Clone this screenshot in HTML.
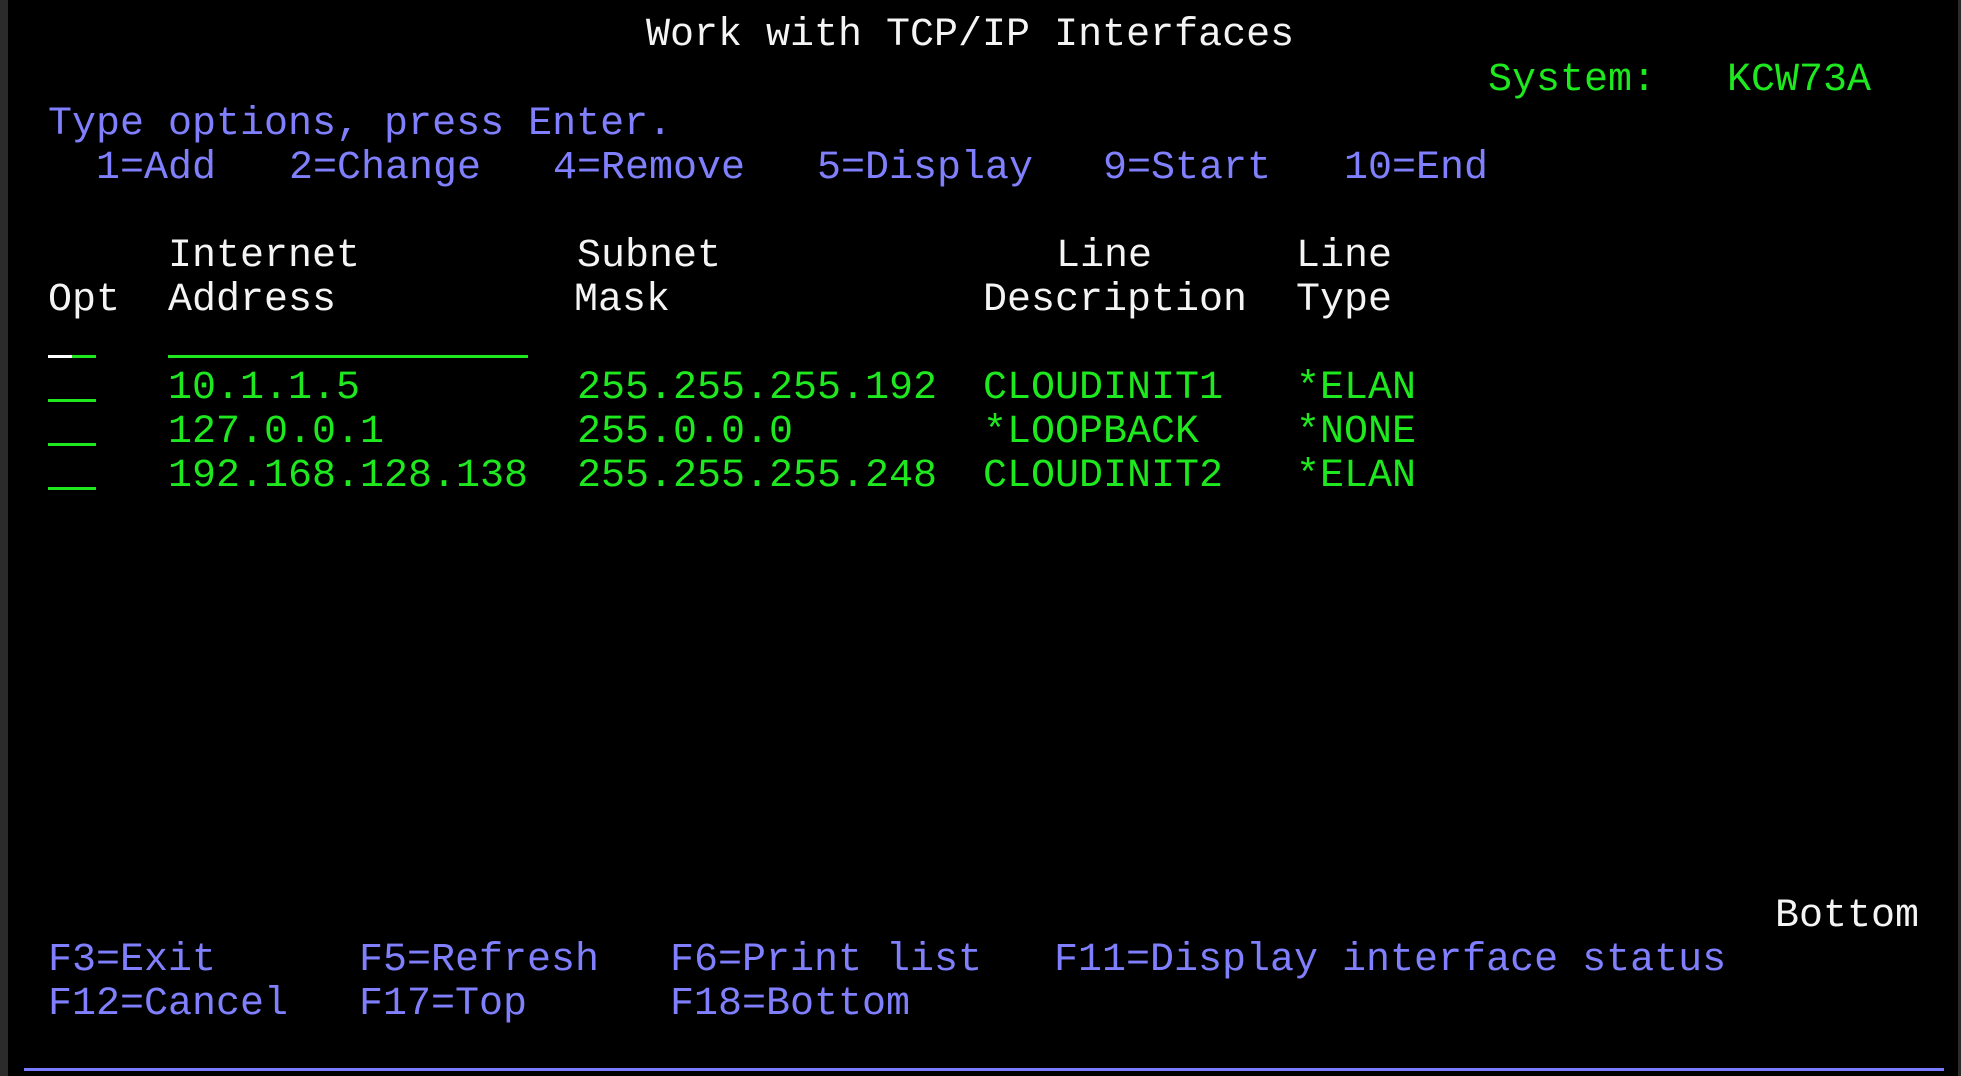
<!DOCTYPE html>
<html><head><meta charset="utf-8"><style>
html,body{margin:0;padding:0;background:#000;width:1961px;height:1076px;overflow:hidden;position:relative}
.t{position:absolute;height:44px;line-height:44px;font-family:"Liberation Mono",monospace;font-size:40px;white-space:pre;color:#1ee81e}
.w{color:#f4f4f4}.b{color:#8080ff}.g{color:#1ee81e}
.ln{position:absolute;height:3px;background:#1ee81e}
</style></head><body>
<div style="position:absolute;left:0;top:0;width:8px;height:1076px;background:#2b2b2b"></div>
<div style="position:absolute;right:0;top:0;width:3px;height:1076px;background:#2b2b2b"></div>
<div class="t w" style="left:646px;top:14px">Work with TCP/IP Interfaces</div>
<div class="t g" style="left:1488px;top:59px">System:</div>
<div class="t g" style="left:1727px;top:59px">KCW73A</div>
<div class="t b" style="left:48px;top:103px">Type options, press Enter.</div>
<div class="t b" style="left:96px;top:147px">1=Add</div>
<div class="t b" style="left:289px;top:147px">2=Change</div>
<div class="t b" style="left:553px;top:147px">4=Remove</div>
<div class="t b" style="left:817px;top:147px">5=Display</div>
<div class="t b" style="left:1103px;top:147px">9=Start</div>
<div class="t b" style="left:1344px;top:147px">10=End</div>
<div class="t w" style="left:168px;top:235px">Internet</div>
<div class="t w" style="left:577px;top:235px">Subnet</div>
<div class="t w" style="left:1056px;top:235px">Line</div>
<div class="t w" style="left:1296px;top:235px">Line</div>
<div class="t w" style="left:48px;top:279px">Opt</div>
<div class="t w" style="left:168px;top:279px">Address</div>
<div class="t w" style="left:574px;top:279px">Mask</div>
<div class="t w" style="left:983px;top:279px">Description</div>
<div class="t w" style="left:1296px;top:279px">Type</div>
<div class="t g" style="left:168px;top:367px">10.1.1.5</div>
<div class="t g" style="left:577px;top:367px">255.255.255.192</div>
<div class="t g" style="left:983px;top:367px">CLOUDINIT1</div>
<div class="t g" style="left:1296px;top:367px">*ELAN</div>
<div class="t g" style="left:168px;top:411px">127.0.0.1</div>
<div class="t g" style="left:577px;top:411px">255.0.0.0</div>
<div class="t g" style="left:983px;top:411px">*LOOPBACK</div>
<div class="t g" style="left:1296px;top:411px">*NONE</div>
<div class="t g" style="left:168px;top:455px">192.168.128.138</div>
<div class="t g" style="left:577px;top:455px">255.255.255.248</div>
<div class="t g" style="left:983px;top:455px">CLOUDINIT2</div>
<div class="t g" style="left:1296px;top:455px">*ELAN</div>
<div class="ln" style="left:48px;top:355px;width:48px"></div>
<div class="ln" style="left:48px;top:355px;width:24px;background:#fff"></div>
<div class="ln" style="left:168px;top:355px;width:360px"></div>
<div class="ln" style="left:48px;top:399px;width:48px"></div>
<div class="ln" style="left:48px;top:443px;width:48px"></div>
<div class="ln" style="left:48px;top:487px;width:48px"></div>
<div class="t w" style="left:1775px;top:895px">Bottom</div>
<div class="t b" style="left:48px;top:939px">F3=Exit</div>
<div class="t b" style="left:359px;top:939px">F5=Refresh</div>
<div class="t b" style="left:670px;top:939px">F6=Print list</div>
<div class="t b" style="left:1054px;top:939px">F11=Display interface status</div>
<div class="t b" style="left:48px;top:983px">F12=Cancel</div>
<div class="t b" style="left:359px;top:983px">F17=Top</div>
<div class="t b" style="left:670px;top:983px">F18=Bottom</div>
<div style="position:absolute;left:24px;top:1068px;width:1920px;height:3px;background:#7b7bff"></div>
</body></html>
